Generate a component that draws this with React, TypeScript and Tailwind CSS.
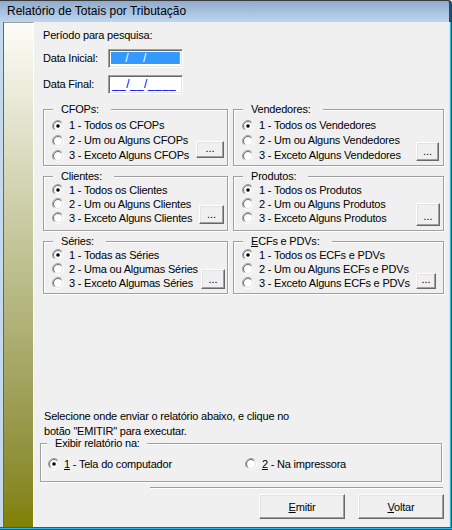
import React from "react";

const Radio = ({ checked }: { checked?: boolean }) => (
  <svg width="12" height="12" viewBox="0 0 12 12" className="shrink-0">
    <defs>
      <linearGradient id="rgo" x1="0" y1="0" x2="1" y2="1">
        <stop offset="0.42" stopColor="#a0a0a0" />
        <stop offset="0.58" stopColor="#ffffff" />
      </linearGradient>
      <linearGradient id="rgi" x1="0" y1="0" x2="1" y2="1">
        <stop offset="0.42" stopColor="#696969" />
        <stop offset="0.58" stopColor="#e3e3e3" />
      </linearGradient>
    </defs>
    <circle cx="6" cy="6" r="5.5" fill="none" stroke="url(#rgo)" />
    <circle cx="6" cy="6" r="4.5" fill="#ffffff" stroke="url(#rgi)" />
    {checked && <circle cx="6" cy="6" r="1.8" fill="#000000" />}
  </svg>
);

const bevel =
  "border border-t-white border-l-white border-r-[#696969] border-b-[#696969] shadow-[inset_-1px_-1px_0_#a0a0a0,inset_1px_1px_0_#e3e3e3] bg-[#f0f0f0]";

type GroupProps = {
  title: React.ReactNode;
  options: string[];
  box: string;
  body: string;
  row: string;
  btn: string;
};

function Group({ title, options, box, body, row, btn }: GroupProps) {
  return (
    <div className={`relative border border-[#a0a0a0] shadow-[inset_1px_1px_0_#fff,1px_1px_0_#fff] ${box}`}>
      <span className="absolute -top-[7px] left-[9px] pl-[8px] pr-[12px] bg-[#f0f0f0] leading-[13px] whitespace-nowrap">
        {title}
      </span>
      <div className={`flex ${body}`}>
        <div className="flex-1 min-w-0 flex flex-col pl-[8px]">
          {options.map((o, i) => (
            <div key={i} className={`flex items-center ${row}`}>
              <Radio checked={i === 0} />
              <span className="ml-[5px] whitespace-nowrap leading-[13px]">{o}</span>
            </div>
          ))}
        </div>
        <div className={`self-end shrink-0 flex items-end justify-center leading-[11px] ${bevel} ${btn}`}>
          <span className="pb-[3px] tracking-normal">...</span>
        </div>
      </div>
    </div>
  );
}

export default function App() {
  return (
    <div className="w-[452px] h-[530px] flex flex-col overflow-hidden bg-[#f0f0f0] text-black text-[11px] tracking-[-0.2px] font-['Liberation_Sans',Arial,sans-serif]">
      {/* title bar */}
      <div className="h-[22px] shrink-0 flex items-center pl-[7px] pb-[1px] border-t border-t-[#3a3a3a] border-r-[3px] border-r-[#1d4d6e] rounded-tr-[4px] bg-gradient-to-b from-[#91abcd] to-[#bed6ef] text-[12px] tracking-normal">
        Relatório de Totais por Tributação
      </div>

      <div className="flex-1 flex min-h-0">
        {/* left frame */}
        <div className="w-[4px] shrink-0 bg-[#c4d9ee] border-r border-r-[#4d6a90]" />
        {/* olive strip */}
        <div className="w-[30px] shrink-0 border-t border-t-[#a0a0a0] border-r border-r-white bg-gradient-to-b from-[#fdfdf8] to-[#808000]" />

        {/* content */}
        <div className="flex-1 min-w-0 flex flex-col pl-[9px] pr-[5px] pt-[7px]">
          <div className="leading-[13px] h-[13px]">Período para pesquisa:</div>

          <div className="mt-[7px] h-[19px] flex items-center">
            <span className="w-[65px]">Data Inicial:</span>
            <div className="w-[75px] h-[19px] bg-white border border-t-[#a0a0a0] border-l-[#a0a0a0] border-r-white border-b-white shadow-[inset_1px_1px_0_#696969,inset_-1px_-1px_0_#e3e3e3] pl-[2px] pt-[2px]">
              <div className="w-[69px] h-[12px] bg-[#3399ff] text-white text-[12px] leading-[12px] tracking-[0.4px] overflow-hidden border-r border-r-[#e08a2c]">
                __/__/____
              </div>
            </div>
          </div>

          <div className="mt-[7px] h-[19px] flex items-center">
            <span className="w-[65px]">Data Final:</span>
            <div className="w-[75px] h-[19px] bg-white border border-t-[#a0a0a0] border-l-[#a0a0a0] border-r-white border-b-white shadow-[inset_1px_1px_0_#696969,inset_-1px_-1px_0_#e3e3e3] pl-[3px] pt-[2px]">
              <div className="text-[#0000ff] text-[12px] leading-[12px] tracking-[0.4px]">__/__/____</div>
            </div>
          </div>

          <div className="mt-[15px] grid grid-cols-[185px_211px] gap-x-[5px] gap-y-[10px]">
            <Group
              title="CFOPs:"
              options={["1 - Todos os CFOPs", "2 - Um ou Alguns CFOPs", "3 - Exceto Alguns CFOPs"]}
              box="h-[57px]"
              body="pt-[8px]"
              row="h-[15px]"
              btn="w-[28px] h-[17px] mb-[5px] mr-[3px]"
            />
            <Group
              title="Vendedores:"
              options={["1 - Todos os Vendedores", "2 - Um ou Alguns Vendedores", "3 - Exceto Alguns Vendedores"]}
              box="h-[57px]"
              body="pt-[8px]"
              row="h-[15px]"
              btn="w-[23px] h-[19px] mb-[2px] mr-[4px]"
            />
            <Group
              title="Clientes:"
              options={["1 - Todos os Clientes", "2 - Um ou Alguns Clientes", "3 - Exceto Alguns Clientes"]}
              box="h-[55px]"
              body="pt-[6px]"
              row="h-[14px]"
              btn="w-[25px] h-[19px] mb-[1px] mr-[3px]"
            />
            <Group
              title="Produtos:"
              options={["1 - Todos os Produtos", "2 - Um ou Alguns Produtos", "3 - Exceto Alguns Produtos"]}
              box="h-[55px]"
              body="pt-[6px]"
              row="h-[14px]"
              btn="w-[24px] h-[23px] -mb-px mr-[3px]"
            />
            <Group
              title="Séries:"
              options={["1 - Todas as Séries", "2 - Uma ou Algumas Séries", "3 - Exceto Algumas Séries"]}
              box="h-[53px]"
              body="pt-[6px]"
              row="h-[14px]"
              btn="w-[24px] h-[20px] mb-[1px] mr-[2px]"
            />
            <Group
              title={
                <>
                  <span className="underline underline-offset-[1px]">E</span>CFs e PDVs:
                </>
              }
              options={["1 - Todos os ECFs e PDVs", "2 - Um ou Alguns ECFs e PDVs", "3 - Exceto Alguns ECFs e PDVs"]}
              box="h-[53px]"
              body="pt-[6px]"
              row="h-[14px]"
              btn="w-[20px] h-[16px] mb-[1px] mr-[7px]"
            />
          </div>

          <div className="mt-[115px] ml-[1px] leading-[15px]">
            Selecione onde enviar o relatório abaixo, e clique no
            <br />
            botão "EMITIR" para executar.
          </div>

          <div className="relative mt-[4px] -ml-[3px] mr-[2px] h-[39px] border border-[#a0a0a0] shadow-[inset_1px_1px_0_#fff,1px_1px_0_#fff]">
            <span className="absolute -top-[7px] left-[6px] pl-[8px] pr-[7px] bg-[#f0f0f0] leading-[13px]">
              Exibir relatório na:
            </span>
            <div className="flex pt-[13px] pl-[7px]">
              <div className="w-[197px] h-[14px] flex items-center">
                <Radio checked />
                <span className="ml-[4px]">
                  <span className="underline underline-offset-[1px]">1</span> - Tela do computador
                </span>
              </div>
              <div className="h-[14px] flex items-center">
                <Radio />
                <span className="ml-[5px]">
                  <span className="underline underline-offset-[1px]">2</span> - Na impressora
                </span>
              </div>
            </div>
          </div>

          <div className="mt-[5px] self-end mr-[1px] w-[293px] h-[2px] border-t border-t-[#a0a0a0] border-b border-b-white" />

          <div className="mt-[5px] flex justify-end gap-[13px]">
            <div className={`w-[86px] h-[25px] flex items-center justify-center pt-[2px] ${bevel}`}>
              <span>
                <span className="underline underline-offset-[1px]">E</span>mitir
              </span>
            </div>
            <div className={`w-[86px] h-[25px] flex items-center justify-center pt-[2px] ${bevel}`}>
              <span>
                <span className="underline underline-offset-[1px]">V</span>oltar
              </span>
            </div>
          </div>
        </div>

        {/* right frame */}
        <div className="w-[3px] shrink-0 bg-[#2bb8e2] border-l border-l-[#cfe9f5] border-r border-r-[#1d4d6e]" />
      </div>

      {/* bottom frame */}
      <div className="h-[3px] shrink-0 bg-[#2bb8e2] border-t border-t-[#2d5c7e] border-b border-b-[#1d4d6e]" />
    </div>
  );
}
